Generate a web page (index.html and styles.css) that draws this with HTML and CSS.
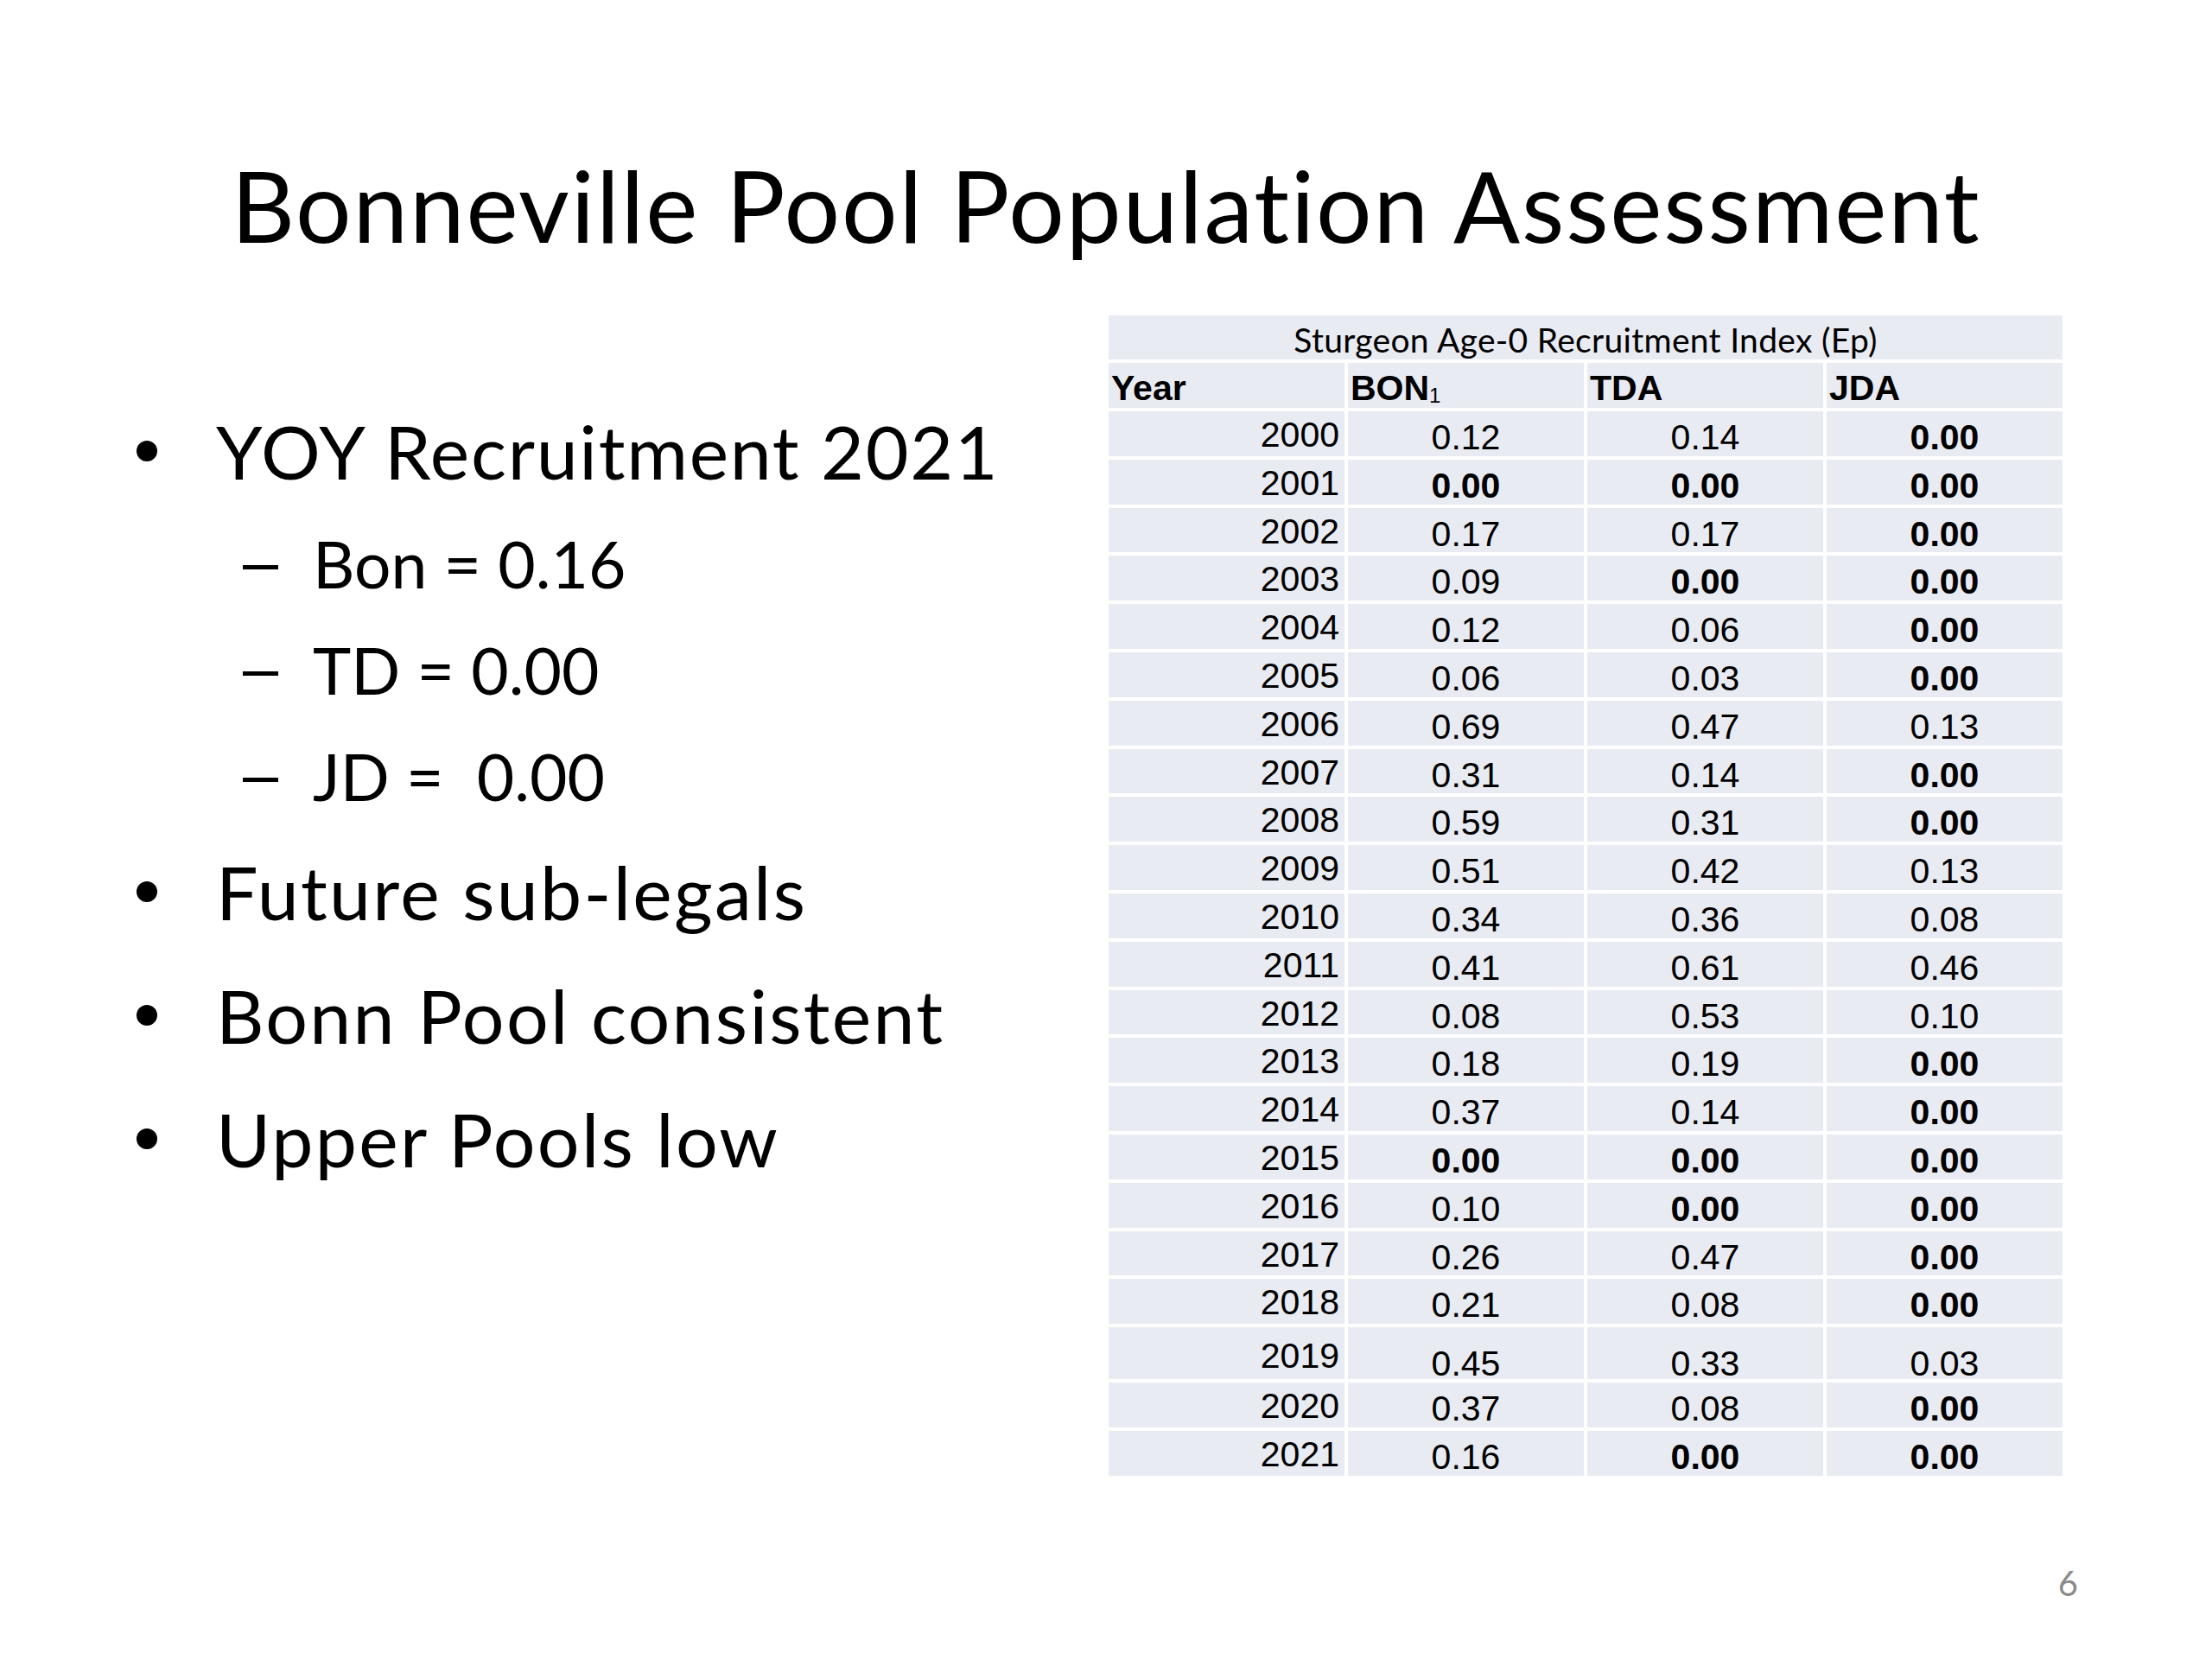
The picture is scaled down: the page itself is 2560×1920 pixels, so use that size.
FILE: index.html
```html
<!DOCTYPE html>
<html lang="en">
<head>
<meta charset="utf-8">
<title>Bonneville Pool Population Assessment</title>
<link rel="stylesheet" href="styles.css">
</head>
<body>
<div class="slide">
  <h1 class="title">Bonneville Pool Population Assessment</h1>
  <div class="content">
    <ul class="points">
      <li class="l1 tight">YOY Recruitment 2021</li>
      <li class="l2">Bon = 0.16</li>
      <li class="l2">TD = 0.00</li>
      <li class="l2">JD =  0.00</li>
      <li class="l1">Future sub-legals</li>
      <li class="l1">Bonn Pool consistent</li>
      <li class="l1">Upper Pools low</li>
    </ul>
    <div class="table">
      <div class="cap">Sturgeon Age-0 Recruitment Index (Ep)</div>
      <div class="hd">Year</div><div class="hd">BON<sub>1</sub></div><div class="hd">TDA</div><div class="hd">JDA</div>
      <div class="yr">2000</div><div class="v">0.12</div><div class="v">0.14</div><div class="v b">0.00</div>
      <div class="yr">2001</div><div class="v b">0.00</div><div class="v b">0.00</div><div class="v b">0.00</div>
      <div class="yr">2002</div><div class="v">0.17</div><div class="v">0.17</div><div class="v b">0.00</div>
      <div class="yr">2003</div><div class="v">0.09</div><div class="v b">0.00</div><div class="v b">0.00</div>
      <div class="yr">2004</div><div class="v">0.12</div><div class="v">0.06</div><div class="v b">0.00</div>
      <div class="yr">2005</div><div class="v">0.06</div><div class="v">0.03</div><div class="v b">0.00</div>
      <div class="yr">2006</div><div class="v">0.69</div><div class="v">0.47</div><div class="v">0.13</div>
      <div class="yr">2007</div><div class="v">0.31</div><div class="v">0.14</div><div class="v b">0.00</div>
      <div class="yr">2008</div><div class="v">0.59</div><div class="v">0.31</div><div class="v b">0.00</div>
      <div class="yr">2009</div><div class="v">0.51</div><div class="v">0.42</div><div class="v">0.13</div>
      <div class="yr">2010</div><div class="v">0.34</div><div class="v">0.36</div><div class="v">0.08</div>
      <div class="yr">2011</div><div class="v">0.41</div><div class="v">0.61</div><div class="v">0.46</div>
      <div class="yr">2012</div><div class="v">0.08</div><div class="v">0.53</div><div class="v">0.10</div>
      <div class="yr">2013</div><div class="v">0.18</div><div class="v">0.19</div><div class="v b">0.00</div>
      <div class="yr">2014</div><div class="v">0.37</div><div class="v">0.14</div><div class="v b">0.00</div>
      <div class="yr">2015</div><div class="v b">0.00</div><div class="v b">0.00</div><div class="v b">0.00</div>
      <div class="yr">2016</div><div class="v">0.10</div><div class="v b">0.00</div><div class="v b">0.00</div>
      <div class="yr">2017</div><div class="v">0.26</div><div class="v">0.47</div><div class="v b">0.00</div>
      <div class="yr">2018</div><div class="v">0.21</div><div class="v">0.08</div><div class="v b">0.00</div>
      <div class="yr tall">2019</div><div class="v tall">0.45</div><div class="v tall">0.33</div><div class="v tall">0.03</div>
      <div class="yr">2020</div><div class="v">0.37</div><div class="v">0.08</div><div class="v b">0.00</div>
      <div class="yr">2021</div><div class="v">0.16</div><div class="v b">0.00</div><div class="v b">0.00</div>
    </div>
  </div>
  <div class="footer"><span class="num">6</span></div>
</div>
</body>
</html>
```

FILE: styles.css
```css
* { box-sizing: border-box; }
body { margin: 0; background: #fff; }

.slide {
  width: 2560px;
  height: 1920px;
  display: flex;
  flex-direction: column;
  font-family: Lato, "Open Sans", sans-serif;
  font-variant-ligatures: none;
  color: #000;
  background: #fff;
}

.title {
  margin: 0;
  padding-top: 168px;
  font-size: 114px;
  font-weight: 400;
  line-height: 137px;
  letter-spacing: 1.8px;
  text-align: center;
}

.content {
  display: flex;
  padding-left: 158px;
}

.points {
  list-style: none;
  margin: 166.7px 0 0;
  padding: 0;
  width: 1125px;
  flex: none;
}
.points li { white-space: pre; display: flex; }

.l1 { font-size: 86px; line-height: 100px; letter-spacing: 2.3px; }
.l1.tight { letter-spacing: 1.7px; }
.l1::before {
  content: "";
  flex: none;
  width: 24px;
  height: 24px;
  border-radius: 50%;
  background: #000;
  margin: 38.3px 68px 0 0;
}
.l2 { font-size: 75px; line-height: 90px; }
.l2::before {
  content: "";
  flex: none;
  width: 41px;
  height: 5px;
  background: #000;
  margin: 47px 40px 0 123px;
}
.l1 + .l2 { margin-top: 35.8px; }
.l2 + .l2 { margin-top: 33px; }
.l2 + .l1 { margin-top: 38.2px; }
.l1 + .l1 { margin-top: 43px; }

.table {
  margin-top: 60px;
  display: grid;
  grid-template-columns: repeat(4, 273px);
  grid-template-rows: 51px 52px repeat(19, 51.8px) 60px repeat(2, 51.8px);
  gap: 4px;
  font-family: "Liberation Sans", Arial, sans-serif;
  font-size: 41px;
  color: #000;
}
.table > div { background: #e9ebf2; white-space: nowrap; }

.cap {
  grid-column: 1 / -1;
  font-family: Lato, "Open Sans", sans-serif;
  font-size: 39px;
  line-height: 56px;
  letter-spacing: 0.3px;
  text-align: center;
}
.hd { font-weight: 700; line-height: 59px; padding-left: 3px; }
.hd sub { font-size: 24px; font-weight: 400; vertical-align: -3px; line-height: 0; }
.yr { text-align: right; padding-right: 6px; line-height: 55px; }
.v { text-align: center; line-height: 60px; }
.b { font-weight: 700; }
.yr.tall { line-height: 67px; }
.v.tall { line-height: 85px; }

.footer {
  margin-top: auto;
  display: flex;
  justify-content: flex-end;
  padding: 0 155px 64px 0;
}
.num { font-size: 40px; line-height: 48px; color: #8a8a8a; }
```
